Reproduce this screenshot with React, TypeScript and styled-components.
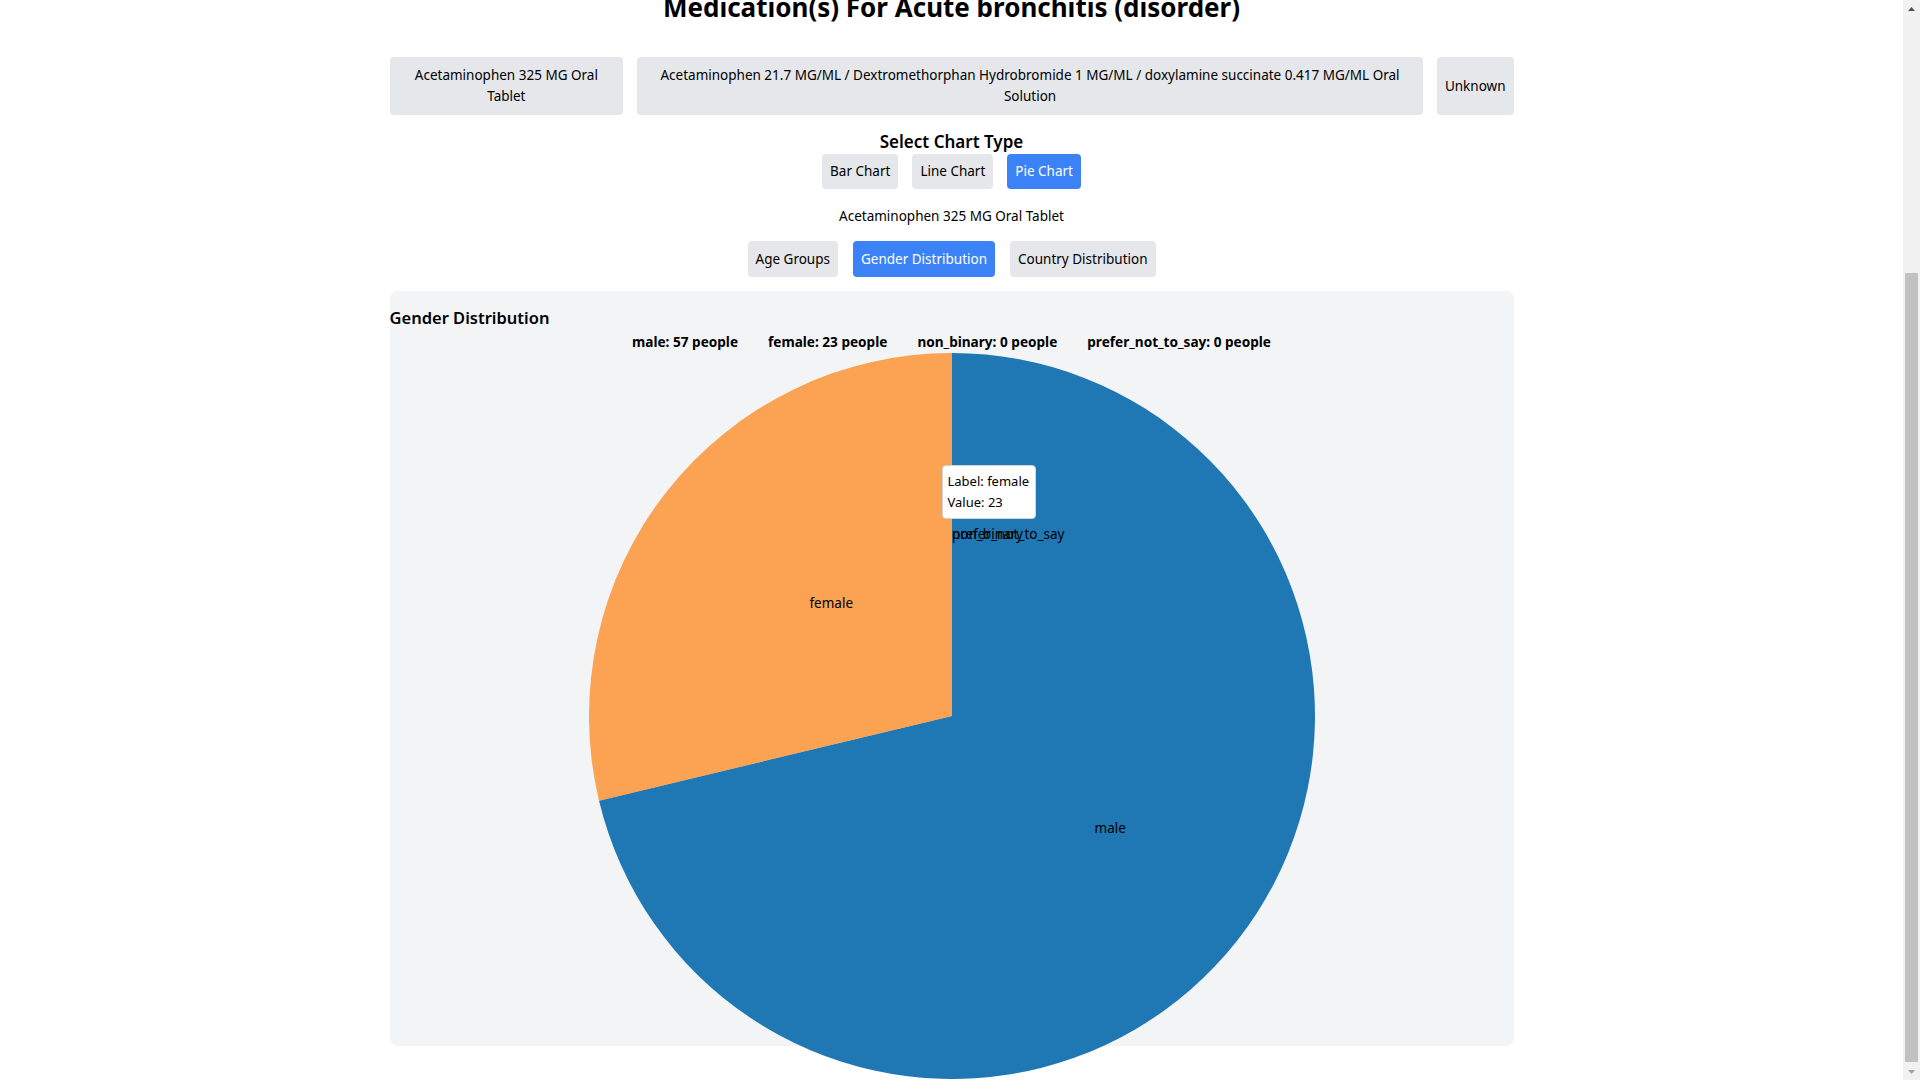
import React from "react";
import styled, { createGlobalStyle } from "styled-components";

const GlobalStyle = createGlobalStyle`
  html, body {
    margin: 0;
    padding: 0;
    overflow: hidden;
    background: #ffffff;
    color: #000000;
    font-family: "Segoe UI", "Noto Sans", "Liberation Sans", sans-serif;
  }
  * { box-sizing: border-box; }
`;

/* The window: the visible page area plus its vertical scrollbar */
const Window = styled.div`
  display: flex;
  height: 100vh;
  overflow: hidden;
`;

const Viewport = styled.div`
  flex: 1;
  min-width: 0;
  overflow: hidden;
`;

/* The page is scrolled to its end; this offset is the scroll position */
const ScrolledPage = styled.div<{ $scrollTop: number }>`
  margin-top: ${(p) => -p.$scrollTop}px;
`;

const ScrollbarTrack = styled.div`
  width: 17px;
  flex: 0 0 17px;
  display: flex;
  flex-direction: column;
  background: #f1f1f1;
`;

const ScrollArrow = styled.div`
  height: 17px;
  flex: 0 0 17px;
  display: flex;
  align-items: center;
  justify-content: center;
`;

const ScrollThumb = styled.div<{ $length: number }>`
  margin: auto 2px 1px;
  height: ${(p) => p.$length}px;
  background: #c1c1c1;
`;

const Container = styled.div`
  max-width: 1124px;
  margin: 0 auto;
`;

const Heading = styled.h1`
  margin: 0 0 34px;
  font-size: 26px;
  line-height: 32px;
  font-weight: 700;
  text-align: center;
`;

const MedicationRow = styled.div`
  display: flex;
  gap: 14px;
`;

const Button = styled.button<{ $active?: boolean; $tall?: boolean }>`
  border: 0;
  border-radius: 4px;
  padding: 7px 8px;
  font-family: inherit;
  font-size: 13.5px;
  line-height: ${(p) => (p.$tall ? "22px" : "21px")};
  color: ${(p) => (p.$active ? "#ffffff" : "#000000")};
  background: ${(p) => (p.$active ? "#3b82f6" : "#e5e7eb")};
  cursor: pointer;
`;

const MedicationButton = styled(Button)`
  padding: 8px;
  text-align: center;
`;

const SectionTitle = styled.h3`
  margin: 14px 0 0;
  font-size: 17px;
  line-height: 25px;
  font-weight: 600;
  text-align: center;
`;

const ButtonGroup = styled.div<{ $gap: number }>`
  display: flex;
  justify-content: center;
  gap: ${(p) => p.$gap}px;
`;

const SelectedName = styled.p`
  margin: 17px 0 14px;
  font-size: 13.5px;
  line-height: 21px;
  text-align: center;
`;

const Panel = styled.div`
  margin-top: 14px;
  height: 755px;
  padding-top: 13px;
  background: #f3f4f6;
  border-radius: 8px;
`;

const PanelTitle = styled.h2`
  margin: 0;
  font-size: 16.5px;
  line-height: 28px;
  font-weight: 600;
`;

const Legend = styled.div`
  display: flex;
  justify-content: center;
  gap: 30px;
  font-size: 13.6px;
  line-height: 20px;
  font-weight: 700;
`;

const ChartArea = styled.div`
  position: relative;
  width: 728px;
  height: 728px;
  margin: 0 auto;
`;

const PieSvg = styled.svg`
  display: block;
  overflow: visible;
`;

const SliceLabel = styled.text`
  font-family: "Segoe UI", "Noto Sans", "Liberation Sans", sans-serif;
  font-size: 13.5px;
  fill: #000000;
`;

const Tooltip = styled.div`
  position: absolute;
  left: 354px;
  top: 113px;
  width: 94px;
  padding: 5px;
  background: #ffffff;
  border: 1px solid #d1d5db;
  border-radius: 4px;
  font-size: 13px;
  line-height: 21px;
`;

type Datum = { label: string; value: number };

const genderData: Datum[] = [
  { label: "male", value: 57 },
  { label: "female", value: 23 },
  { label: "non_binary", value: 0 },
  { label: "prefer_not_to_say", value: 0 },
];

const colors = ["#1f77b4", "#ff7f0e", "#2ca02c", "#d62728"];

const R = 363;
const C = 364;

function arcPath(a0: number, a1: number): string {
  const x0 = C + R * Math.sin(a0);
  const y0 = C - R * Math.cos(a0);
  const x1 = C + R * Math.sin(a1);
  const y1 = C - R * Math.cos(a1);
  const large = a1 - a0 > Math.PI ? 1 : 0;
  return `M${x0},${y0}A${R},${R} 0 ${large} 1 ${x1},${y1}L${C},${C}Z`;
}

function PieChart() {
  const total = genderData.reduce((s, d) => s + d.value, 0);
  let angle = 0;
  const slices = genderData.map((d, i) => {
    const a0 = angle;
    const a1 = angle + (d.value / total) * Math.PI * 2;
    angle = a1;
    const mid = (a0 + a1) / 2;
    return {
      ...d,
      a0,
      a1,
      color: colors[i],
      lx: C + (R / 2) * Math.sin(mid),
      ly: C - (R / 2) * Math.cos(mid),
    };
  });
  return (
    <ChartArea>
      <PieSvg width={728} height={728} viewBox="0 0 728 728">
        {slices.map((s) =>
          s.value > 0 ? (
            <path
              key={s.label}
              d={arcPath(s.a0, s.a1)}
              fill={s.color}
              opacity={s.label === "female" ? 0.7 : 1}
            />
          ) : null
        )}
        {slices.map((s) => (
          <SliceLabel key={s.label + "-t"} x={s.lx} y={s.ly} dy="0.35em">
            {s.label}
          </SliceLabel>
        ))}
      </PieSvg>
      <Tooltip>
        <div>Label: female</div>
        <div>Value: 23</div>
      </Tooltip>
    </ChartArea>
  );
}

const medications = [
  "Acetaminophen 325 MG Oral Tablet",
  "Acetaminophen 21.7 MG/ML / Dextromethorphan Hydrobromide 1 MG/ML / doxylamine succinate 0.417 MG/ML Oral Solution",
  "Unknown",
];

function Scrollbar() {
  return (
    <ScrollbarTrack>
      <ScrollArrow>
        <svg width="7" height="4" viewBox="0 0 7 4">
          <polygon points="0,4 3.5,0 7,4" fill="#505050" />
        </svg>
      </ScrollArrow>
      <ScrollThumb $length={789} />
      <ScrollArrow>
        <svg width="7" height="4" viewBox="0 0 7 4">
          <polygon points="0,0 7,0 3.5,4" fill="#a3a3a3" />
        </svg>
      </ScrollArrow>
    </ScrollbarTrack>
  );
}

export default function App() {
  return (
    <>
      <GlobalStyle />
      <Window>
        <Viewport>
          <ScrolledPage $scrollTop={9}>
            <Container>
              <Heading>Medication(s) For Acute bronchitis (disorder)</Heading>
              <MedicationRow>
                {medications.map((m) => (
                  <MedicationButton key={m}>{m}</MedicationButton>
                ))}
              </MedicationRow>
              <SectionTitle>Select Chart Type</SectionTitle>
              <ButtonGroup $gap={14}>
                <Button>Bar Chart</Button>
                <Button>Line Chart</Button>
                <Button $active>Pie Chart</Button>
              </ButtonGroup>
              <SelectedName>Acetaminophen 325 MG Oral Tablet</SelectedName>
              <ButtonGroup $gap={15}>
                <Button $tall>Age Groups</Button>
                <Button $tall $active>
                  Gender Distribution
                </Button>
                <Button $tall>Country Distribution</Button>
              </ButtonGroup>
              <Panel>
                <PanelTitle>Gender Distribution</PanelTitle>
                <Legend>
                  {genderData.map((d) => (
                    <span key={d.label}>
                      {d.label}: {d.value} people
                    </span>
                  ))}
                </Legend>
                <PieChart />
              </Panel>
            </Container>
          </ScrolledPage>
        </Viewport>
        <Scrollbar />
      </Window>
    </>
  );
}
